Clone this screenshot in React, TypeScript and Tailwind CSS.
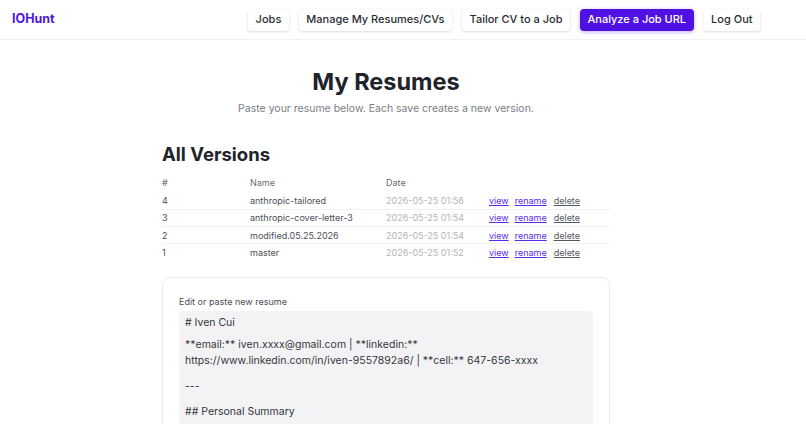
type Version = {
  id: number;
  name: string;
  date: string;
};

const versions: Version[] = [
  { id: 4, name: "anthropic-tailored", date: "2026-05-25 01:56" },
  { id: 3, name: "anthropic-cover-letter-3", date: "2026-05-25 01:54" },
  { id: 2, name: "modified.05.25.2026", date: "2026-05-25 01:54" },
  { id: 1, name: "master", date: "2026-05-25 01:52" },
];

const navItems = ["Jobs", "Manage My Resumes/CVs", "Tailor CV to a Job"];

export default function App() {
  return (
    <div
      className="min-h-screen bg-white text-[#1f2229]"
      style={{ fontFamily: "Inter, 'Noto Sans', sans-serif" }}
    >
      {/* Top bar => logo + nav */}
      <header className="flex h-10 items-center justify-between border-b border-[#f2f2f2] pl-3 pr-[46px]">
        <span className="text-[12.5px] font-bold text-[#4d17e0]">IOHunt</span>
        <nav className="flex items-center gap-2.5">
          {navItems.map((item) => (
            <button
              key={item}
              className="h-[22px] rounded-[4px] bg-white px-[7.5px] text-[11px] font-medium text-[#2a2d33] shadow-[0_1px_3px_rgba(0,0,0,0.14)]"
            >
              {item}
            </button>
          ))}
          <button className="h-[22px] rounded-[4px] bg-[#4f12e2] px-[7.5px] text-[11px] font-medium text-white shadow-[0_1px_4px_rgba(79,18,226,0.35)]">
            Analyze a Job URL
          </button>
          <button className="h-[22px] rounded-[4px] bg-white px-[7.5px] text-[11px] font-medium text-[#2a2d33] shadow-[0_1px_3px_rgba(0,0,0,0.14)]">
            Log Out
          </button>
        </nav>
      </header>

      <main className="ml-[162px] w-[448px]">
        {/* Page title */}
        <div className="pt-[26px] text-center">
          <h1 className="text-[23.5px] font-bold leading-[32px] text-[#202329]">My Resumes</h1>
          <p className="mt-[3px] text-[10.5px] leading-[16px] text-[#7a7d84]">
            Paste your resume below. Each save creates a new version.
          </p>
        </div>

        {/* Versions table */}
        <h2 className="mt-[25px] text-[18.5px] font-bold leading-[24px] text-[#202329]">All Versions</h2>
        <table className="mt-[10px] w-full border-collapse text-[9px] leading-[13px] text-[#4b4e55]">
          <thead>
            <tr className="text-left text-[#6a6d74]">
              <th className="w-[88px] pb-[3px] font-normal">#</th>
              <th className="w-[136px] pb-[3px] font-normal">Name</th>
              <th className="w-[103px] pb-[3px] font-normal">Date</th>
              <th className="pb-[3px] font-normal"></th>
            </tr>
          </thead>
          <tbody>
            {versions.map((v, i) => (
              <tr
                key={v.id}
                className={i < versions.length - 1 ? "h-[17.3px] border-b border-[#f0f0f2]" : "h-[17.3px]"}
              >
                <td>{v.id}</td>
                <td>{v.name}</td>
                <td className="text-[#b3b5ba]">{v.date}</td>
                <td>
                  <span className="text-[#5b2be8] underline">view</span>
                  <span className="ml-[6px] text-[#5b2be8] underline">rename</span>
                  <span className="ml-[7px] text-[#56595f] underline">delete</span>
                </td>
              </tr>
            ))}
          </tbody>
        </table>

        {/* Editor card */}
        <section className="mt-[16px] rounded-[8px] border border-[#ececee] px-[16px] pt-[17px]">
          <label className="block text-[9px] leading-[14px] text-[#4b4e55]">Edit or paste new resume</label>
          <div className="mt-[2px] h-[140px] overflow-hidden rounded-[4px] bg-[#f3f3f5] px-[6px] pt-[4px] text-[10.5px] leading-[15px] text-[#33363c]">
            <p># Iven Cui</p>
            <p className="mt-[7px] leading-[16px]">
              **email:** iven.xxxx@gmail.com | **linkedin:**
              <br />
              https://www.linkedin.com/in/iven-9557892a6/ | **cell:** 647-656-xxxx
            </p>
            <p className="mt-[10px]">---</p>
            <p className="mt-[10px]">## Personal Summary</p>
          </div>
        </section>
      </main>
    </div>
  );
}
